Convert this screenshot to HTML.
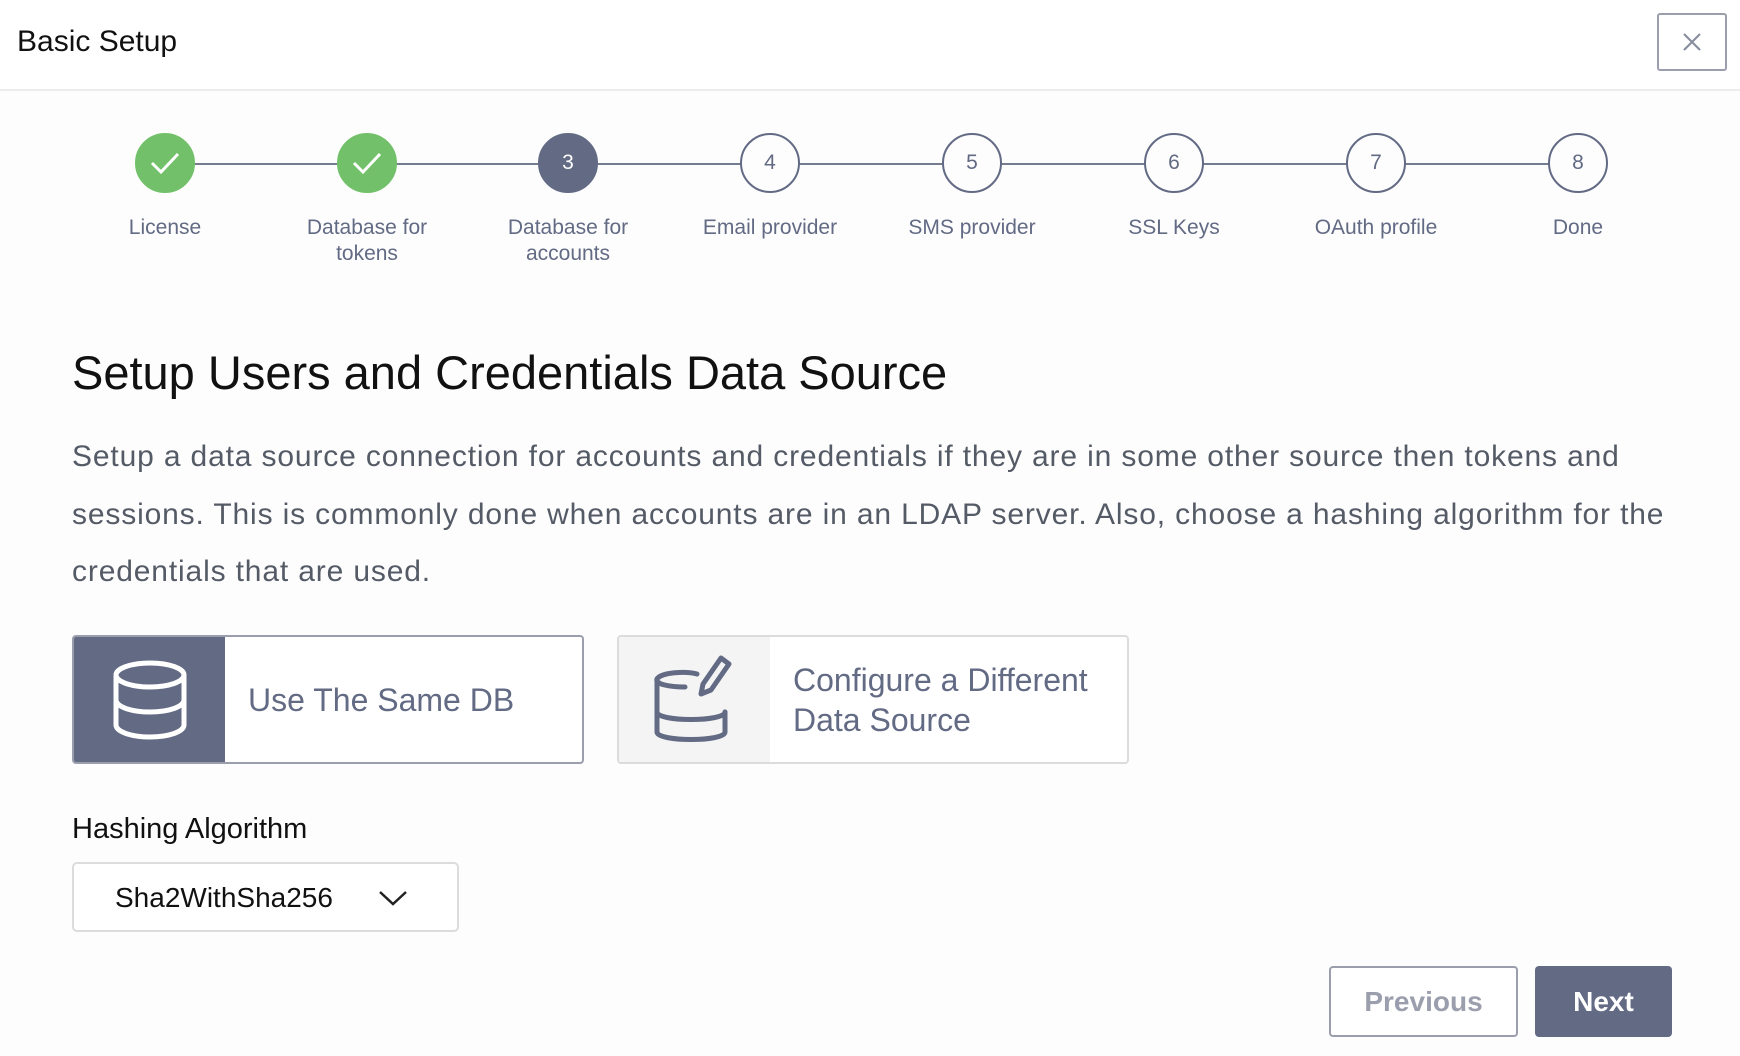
<!DOCTYPE html>
<html><head><style>
*{box-sizing:border-box;margin:0;padding:0}
body{width:1740px;height:1056px;overflow:hidden;background:#fdfdfd;font-family:"Liberation Sans",sans-serif;position:relative;color:#111}
.hdr{position:absolute;left:0;top:0;width:1740px;height:91px;border-bottom:2px solid #ececec;background:#fff}
.hdr h1{position:absolute;left:17px;top:25px;font-size:30px;font-weight:normal}
.close{position:absolute;left:1657px;top:13px;width:70px;height:58px;border:2px solid #9a9ead;border-radius:3px}
.line{position:absolute;top:163px;left:165px;width:1413px;height:2px;background:#767c90}
.c{position:absolute;top:133px;width:60px;height:60px;border-radius:50%;display:flex;align-items:center;justify-content:center;font-size:21px;color:#626a84;background:#fdfdfd;border:2px solid #626a84}
.c.g{background:#72c16a;border-color:#72c16a}
.c.a{background:#626a84;color:#fff}
.l{position:absolute;top:215px;width:200px;text-align:center;font-size:21px;color:#626a84;line-height:26px}
h2{position:absolute;left:72px;top:345px;font-size:47px;font-weight:normal;color:#111}
p.d{position:absolute;left:72px;top:428px;width:1680px;font-size:30px;line-height:57.7px;color:#555b66;letter-spacing:0.85px;white-space:nowrap}
.card{position:absolute;top:635px;height:129px;width:512px;border:2px solid #9a9ead;border-radius:4px;background:#fff;overflow:hidden}
.card .ic{position:absolute;left:0;top:0;bottom:0;width:151px;display:flex;align-items:center;justify-content:center}
.card .t{position:absolute;left:174px;top:0;bottom:0;display:flex;align-items:center;font-size:32px;color:#626a84;line-height:40px}
.lab{position:absolute;left:72px;top:813px;font-size:29px;color:#111}
.sel{position:absolute;left:72px;top:862px;width:387px;height:70px;border:2px solid #dcdcdc;border-radius:5px;background:#fff}
.sel span{position:absolute;left:41px;top:18px;font-size:28px}
.btn{position:absolute;top:966px;height:71px;border-radius:4px;display:flex;align-items:center;justify-content:center;font-size:28px;font-weight:bold}
</style></head><body>
<div class="hdr"><h1>Basic Setup</h1>
<div class="close"><svg width="66" height="54" viewBox="0 0 66 54"><path d="M25 19 L41 35 M41 19 L25 35" stroke="#8a8fa0" stroke-width="2.2"/></svg></div></div>
<div class="line"></div>
<div class="c g" style="left:135px"><svg width="32" height="24"><path d="M3 12 L12 21 L29 3" stroke="#fff" stroke-width="3" fill="none"/></svg></div>
<div class="c g" style="left:337px"><svg width="32" height="24"><path d="M3 12 L12 21 L29 3" stroke="#fff" stroke-width="3" fill="none"/></svg></div>
<div class="c a" style="left:538px">3</div>
<div class="c" style="left:740px">4</div>
<div class="c" style="left:942px">5</div>
<div class="c" style="left:1144px">6</div>
<div class="c" style="left:1346px">7</div>
<div class="c" style="left:1548px">8</div>
<div class="l" style="left:65px">License</div>
<div class="l" style="left:267px">Database for<br>tokens</div>
<div class="l" style="left:468px">Database for<br>accounts</div>
<div class="l" style="left:670px">Email provider</div>
<div class="l" style="left:872px">SMS provider</div>
<div class="l" style="left:1074px">SSL Keys</div>
<div class="l" style="left:1276px">OAuth profile</div>
<div class="l" style="left:1478px">Done</div>
<h2>Setup Users and Credentials Data Source</h2>
<p class="d">Setup a data source connection for accounts and credentials if they are in some other source then tokens and<br>sessions. This is commonly done when accounts are in an LDAP server. Also, choose a hashing algorithm for the<br>credentials that are used.</p>
<div class="card" style="left:72px"><div class="ic" style="background:#626a84"><svg width="80" height="84" viewBox="0 0 80 84"><g fill="none" stroke="#fff" stroke-width="5"><ellipse cx="40" cy="17" rx="34" ry="12"/><path d="M6 17 V67 A34 12 0 0 0 74 67 V17"/><path d="M6 42 A34 12 0 0 0 74 42"/></g></svg></div><div class="t">Use The Same DB</div></div>
<div class="card" style="left:617px;border-color:#dcdcdc"><div class="ic" style="background:#f4f4f5"><svg width="96" height="96" viewBox="0 0 96 96"><g fill="none" stroke="#626a84" stroke-width="5" stroke-linejoin="round" stroke-linecap="round"><path d="M50 22 C40 19 14 20 10 27 C8 32 22 35 38 35"/><path d="M10 27 V80 C10 90 78 90 78 80 V60"/><path d="M10 60 C10 70 78 70 78 60"/><path d="M56 32 L74 6 L82 12 L64 38 L54 42 Z"/></g></svg></div><div class="t">Configure a Different<br>Data Source</div></div>
<div class="lab">Hashing Algorithm</div>
<div class="sel"><span>Sha2WithSha256</span><svg style="position:absolute;left:304px;top:25px" width="30" height="18"><path d="M2 3 L15 15 L28 3" stroke="#222" stroke-width="2.5" fill="none"/></svg></div>
<div class="btn" style="left:1329px;width:189px;border:2px solid #9a9ead;color:#9a9ead;background:#fff">Previous</div>
<div class="btn" style="left:1535px;width:137px;background:#626a84;color:#fff">Next</div>
</body></html>
